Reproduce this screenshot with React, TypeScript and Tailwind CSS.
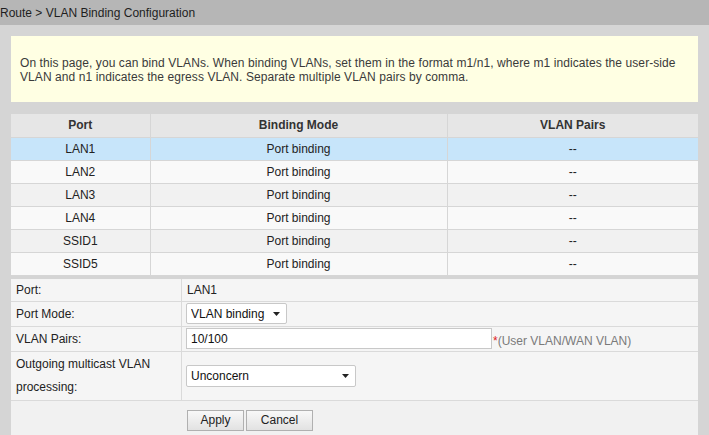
import React from 'react';

const rows = ['LAN1', 'LAN2', 'LAN3', 'LAN4', 'SSID1', 'SSID5'];

const Caret: React.FC = () => (
  <svg width="7" height="4" viewBox="0 0 7 4" className="absolute right-[7px] top-1/2 -translate-y-1/2 pointer-events-none">
    <path d="M0 0h7L3.5 4z" fill="#222" />
  </svg>
);

const App: React.FC = () => {
  return (
    <div className="w-[709px] h-[435px] overflow-hidden bg-[#d5d5d5] font-['Liberation_Sans',Arial,sans-serif] text-[12px] text-[#333]">
      {/* Title bar */}
      <div className="h-[25px] bg-[#b6b6b6] flex items-center text-[#1e1e1e]">
        Route &gt; VLAN Binding Configuration
      </div>

      <div className="pl-[11px] pr-[11px] pt-[11px]">
        {/* Note */}
        <div className="h-[66px] bg-[#ffffe3] px-[9px] pt-[1px] flex items-center leading-[14px] text-[#3a3a3a] tracking-[0.08px]">
          <p>
            On this page, you can bind VLANs. When binding VLANs, set them in the format m1/n1, where m1 indicates the user-side
            <br />
            VLAN and n1 indicates the egress VLAN. Separate multiple VLAN pairs by comma.
          </p>
        </div>

        {/* Binding table */}
        <table className="mt-[12px] w-full table-fixed border-collapse text-[#222]">
          <colgroup>
            <col className="w-[139px]" />
            <col className="w-[297px]" />
            <col />
          </colgroup>
          <thead>
            <tr className="h-[23px] bg-[#e6e6e6] font-bold text-[#333]">
              <th className="border-r border-b border-[#d6d6d6] font-bold">Port</th>
              <th className="border-r border-b border-[#d6d6d6] font-bold">Binding Mode</th>
              <th className="border-b border-[#d6d6d6] font-bold">VLAN Pairs</th>
            </tr>
          </thead>
          <tbody>
            {rows.map((r, i) => (
              <tr
                key={r}
                className={
                  'h-[23px] text-center ' +
                  (i === 0 ? 'bg-[#c7e5fa]' : i % 2 === 1 ? 'bg-[#f9f9f9]' : 'bg-[#f1f1f1]')
                }
              >
                <td className="border-r border-b border-[#d6d6d6]">{r}</td>
                <td className="border-r border-b border-[#d6d6d6]">Port binding</td>
                <td className="border-b border-[#d6d6d6]">--</td>
              </tr>
            ))}
          </tbody>
        </table>

        {/* Config form */}
        <div className="mt-[3px] bg-[#f5f5f5] text-[#222]">
          <div className="grid grid-cols-[171px_1fr] h-[23px] border-b border-[#dadada]">
            <div className="border-r border-[#dadada] pl-[5px] flex items-center">Port:</div>
            <div className="pl-[5px] flex items-center">LAN1</div>
          </div>
          <div className="grid grid-cols-[171px_1fr] h-[25px] border-b border-[#dadada]">
            <div className="border-r border-[#dadada] pl-[5px] flex items-center">Port Mode:</div>
            <div className="pl-[4px] flex items-center">
              <div className="relative">
                <select className="appearance-none w-[101px] h-[21px] bg-white border border-[#c8c8c8] rounded-[2px] pl-[4px] text-[12px] text-[#111] outline-none">
                  <option>VLAN binding</option>
                </select>
                <Caret />
              </div>
            </div>
          </div>
          <div className="grid grid-cols-[171px_1fr] h-[25px] border-b border-[#dadada]">
            <div className="border-r border-[#dadada] pl-[5px] flex items-center">VLAN Pairs:</div>
            <div className="pl-[4px] flex items-center">
              <input
                readOnly
                value="10/100"
                className="w-[306px] h-[21px] bg-white border border-[#c8c8c8] px-[4px] text-[12px] text-[#111] outline-none"
              />
              <span className="text-[#e02020] ml-[1px] mt-[4px]">*</span>
              <span className="text-[#7a7a7a] mt-[4px]">(User VLAN/WAN VLAN)</span>
            </div>
          </div>
          <div className="grid grid-cols-[171px_1fr] h-[49px] border-b border-[#dadada]">
            <div className="border-r border-[#dadada] pl-[5px] flex items-center leading-[23px]">
              <span>
                Outgoing multicast VLAN
                <br />
                processing:
              </span>
            </div>
            <div className="pl-[4px] flex items-center">
              <div className="relative">
                <select className="appearance-none w-[170px] h-[22px] bg-white border border-[#c8c8c8] rounded-[2px] pl-[4px] text-[12px] text-[#111] outline-none">
                  <option>Unconcern</option>
                </select>
                <Caret />
              </div>
            </div>
          </div>
          <div className="h-[40px] bg-[#f1f1f1] pl-[176px] pt-[9px] flex items-start gap-[2px]">
            <button className="w-[57px] h-[21px] border border-[#b0b0b0] bg-gradient-to-b from-[#f8f8f8] to-[#e2e2e2] text-[12px] text-[#222]">
              Apply
            </button>
            <button className="w-[67px] h-[21px] border border-[#b0b0b0] bg-gradient-to-b from-[#f8f8f8] to-[#e2e2e2] text-[12px] text-[#222]">
              Cancel
            </button>
          </div>
        </div>
      </div>
    </div>
  );
};

export default App;
